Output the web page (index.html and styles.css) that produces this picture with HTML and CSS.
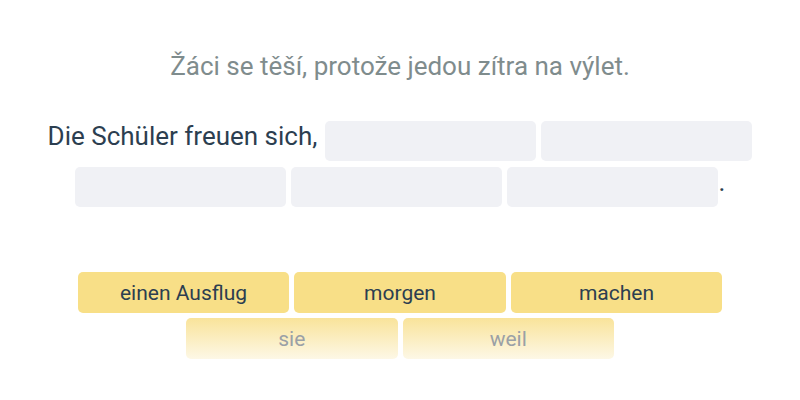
FILE: index.html
```html
<!DOCTYPE html>
<html lang="cs">
<head>
    <meta charset="UTF-8">
    <meta name="viewport" content="width=device-width, initial-scale=1.0">
    <title>Cvičení</title>

    <!-- style -->
    <link rel="stylesheet" href="styles.css">

</head>
<body>
    <div class="exercise">
        <p class="task">Žáci se těší, protože jedou zítra na výlet.</p>

        <div class="sentence">
            <span class="lead">Die Schüler freuen sich,</span>
            <span class="slot"></span>
            <span class="slot"></span>
            <span class="slot"></span>
            <span class="slot"></span>
            <span class="slot"></span>
            <span class="dot">.</span>
        </div>

        <div class="bank">
            <button class="word">einen Ausflug</button>
            <button class="word">morgen</button>
            <button class="word">machen</button>
            <button class="word faded">sie</button>
            <button class="word faded">weil</button>
        </div>
    </div>
</body>
</html>
```

FILE: styles.css
```css
body {
    margin: 0;
    font-family: Roboto, "Noto Sans", sans-serif;
    background-color: #ffffff;
}

.exercise {
    display: flex;
    flex-direction: column;
    align-items: center;
    padding-top: 51px;
}

.task {
    margin: 0;
    font-size: 26px;
    color: #7f8c8d;
}

.sentence {
    display: flex;
    flex-wrap: wrap;
    justify-content: center;
    align-items: flex-start;
    gap: 6px 5px;
    width: 720px;
    margin-top: 40px;
    color: #2c3e50;
    font-size: 26px;
}

.lead {
    margin-right: 3px;
}

.slot {
    width: 211px;
    height: 40px;
    border-radius: 5px;
    background-color: #f0f1f5;
}

.dot {
    margin-left: -4px;
}

.bank {
    display: flex;
    flex-wrap: wrap;
    justify-content: center;
    gap: 5px;
    width: 660px;
    margin-top: 65px;
}

.word {
    width: 211.5px;
    height: 41px;
    border: none;
    border-radius: 5px;
    background-color: #f8df87;
    color: #2c3e50;
    font-family: Roboto, "Noto Sans", sans-serif;
    font-size: 21px;
    padding: 0;
}

.word.faded {
    background: linear-gradient(#f9e39a, #fdf8e6);
    color: #9aa0a6;
}
```
